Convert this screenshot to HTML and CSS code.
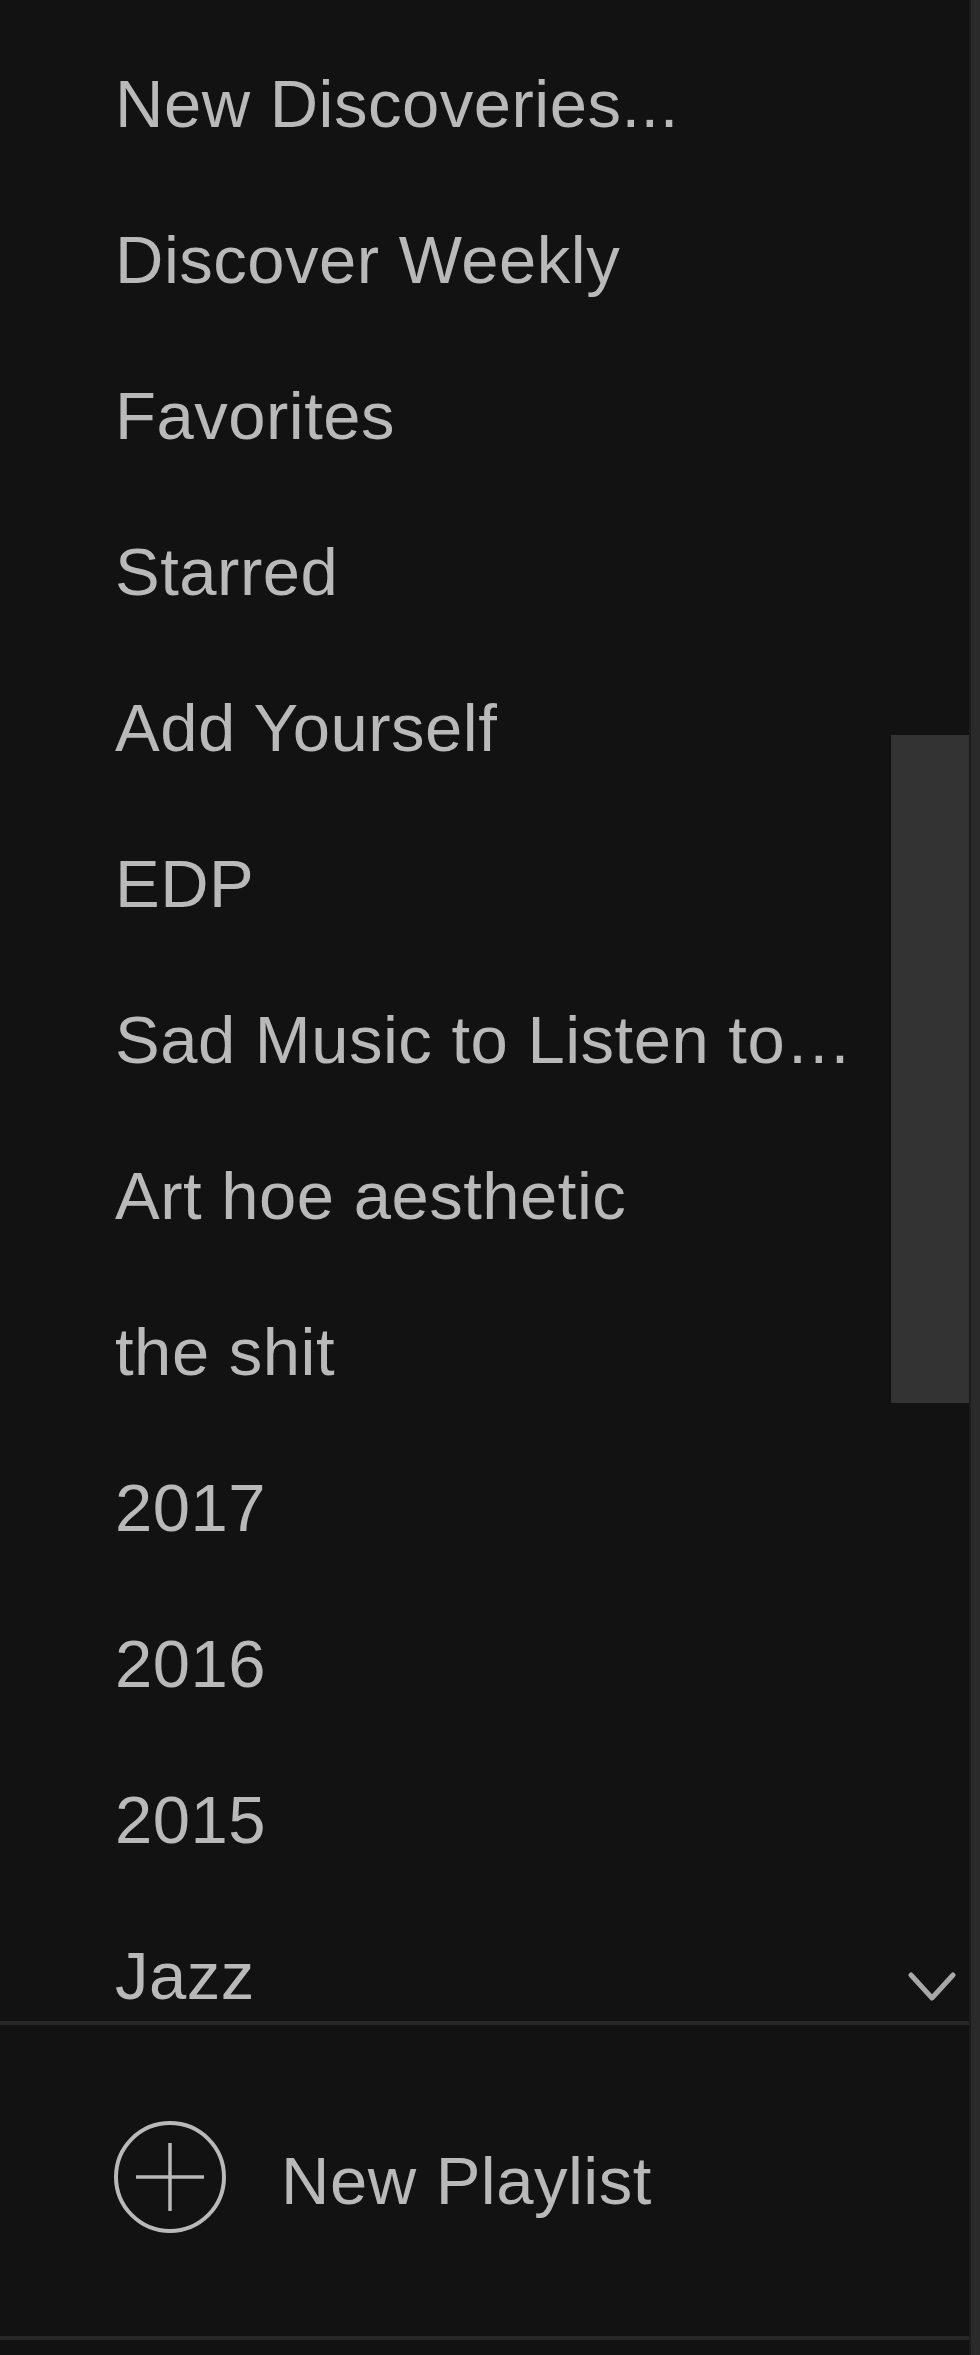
FILE: index.html
```html
<!DOCTYPE html>
<html lang="en">
<head>
  <meta charset="UTF-8" />
  <meta name="viewport" content="width=device-width, initial-scale=1.0"/>
  <title>Playlists</title>
  <link rel="stylesheet" href="styles.css">
</head>
<body>

  <div class="window">
    <!-- Sidebar -->
    <aside class="sidebar">
      <div class="playlist-wrap">
        <ul class="playlists">
          <li>New Discoveries...</li>
          <li>Discover Weekly</li>
          <li>Favorites</li>
          <li>Starred</li>
          <li>Add Yourself</li>
          <li>EDP</li>
          <li>Sad Music to Listen to…</li>
          <li>Art hoe aesthetic</li>
          <li>the shit</li>
          <li>2017</li>
          <li>2016</li>
          <li>2015</li>
          <li>Jazz</li>
        </ul>

        <div class="scroll-thumb"></div>

        <svg class="more-arrow" width="48" height="30" viewBox="0 0 48 30">
          <polyline points="3,3 24,26 45,3" fill="none" stroke="#a8a8a8" stroke-width="5" stroke-linecap="round" stroke-linejoin="round"/>
        </svg>
      </div>

      <div class="sidebar-footer">
        <button class="new-playlist">
          <svg class="plus-icon" width="116" height="116" viewBox="0 0 116 116">
            <circle cx="58" cy="58" r="54" fill="none" stroke="#b9b9b9" stroke-width="4"/>
            <line x1="24" y1="58" x2="92" y2="58" stroke="#b9b9b9" stroke-width="3.5"/>
            <line x1="58" y1="24" x2="58" y2="92" stroke="#b9b9b9" stroke-width="3.5"/>
          </svg>
          <span class="label">New Playlist</span>
        </button>
      </div>
    </aside>

    <div class="edge"></div>
  </div>

</body>
</html>
```

FILE: styles.css
```css
* {
  margin: 0; padding: 0;
  box-sizing: border-box;
}

body, html {
  height: 100%;
  font-family: 'Liberation Sans', Arial, sans-serif;
  background: #121212;
  color: #b9b9b9;
}

.window {
  display: flex;
  height: 2355px;
}

.sidebar {
  flex: 1;
  display: flex;
  flex-direction: column;
}

.playlist-wrap {
  position: relative;
  height: 2025px;
  overflow: hidden;
  border-bottom: 4px solid #282828;
}

.playlists {
  list-style: none;
  padding: 26px 0 0 115px;
}

.playlists li {
  height: 156px;
  line-height: 156px;
  font-size: 67px;
  letter-spacing: 0.5px;
  white-space: nowrap;
  cursor: pointer;
}

.playlists li:hover {
  color: #fff;
}

.scroll-thumb {
  position: absolute;
  top: 735px;
  right: 0;
  width: 78px;
  height: 668px;
  background: #333;
}

.more-arrow {
  position: absolute;
  right: 13px;
  bottom: 19px;
}

.sidebar-footer {
  flex: 1;
  padding-top: 94px;
  border-bottom: 4px solid #282828;
  margin-bottom: 15px;
}

.new-playlist {
  display: flex;
  align-items: center;
  gap: 53px;
  margin-left: 112px;
  background: none;
  border: none;
  color: #b9b9b9;
  font-family: inherit;
  font-size: 67px;
  letter-spacing: 0.5px;
  cursor: pointer;
}

.new-playlist .label {
  padding-top: 6px;
}

.plus-icon {
  display: block;
}

.edge {
  width: 11px;
  background: #2a2a2a;
  border-left: 2px solid #1b1b1b;
}
```
